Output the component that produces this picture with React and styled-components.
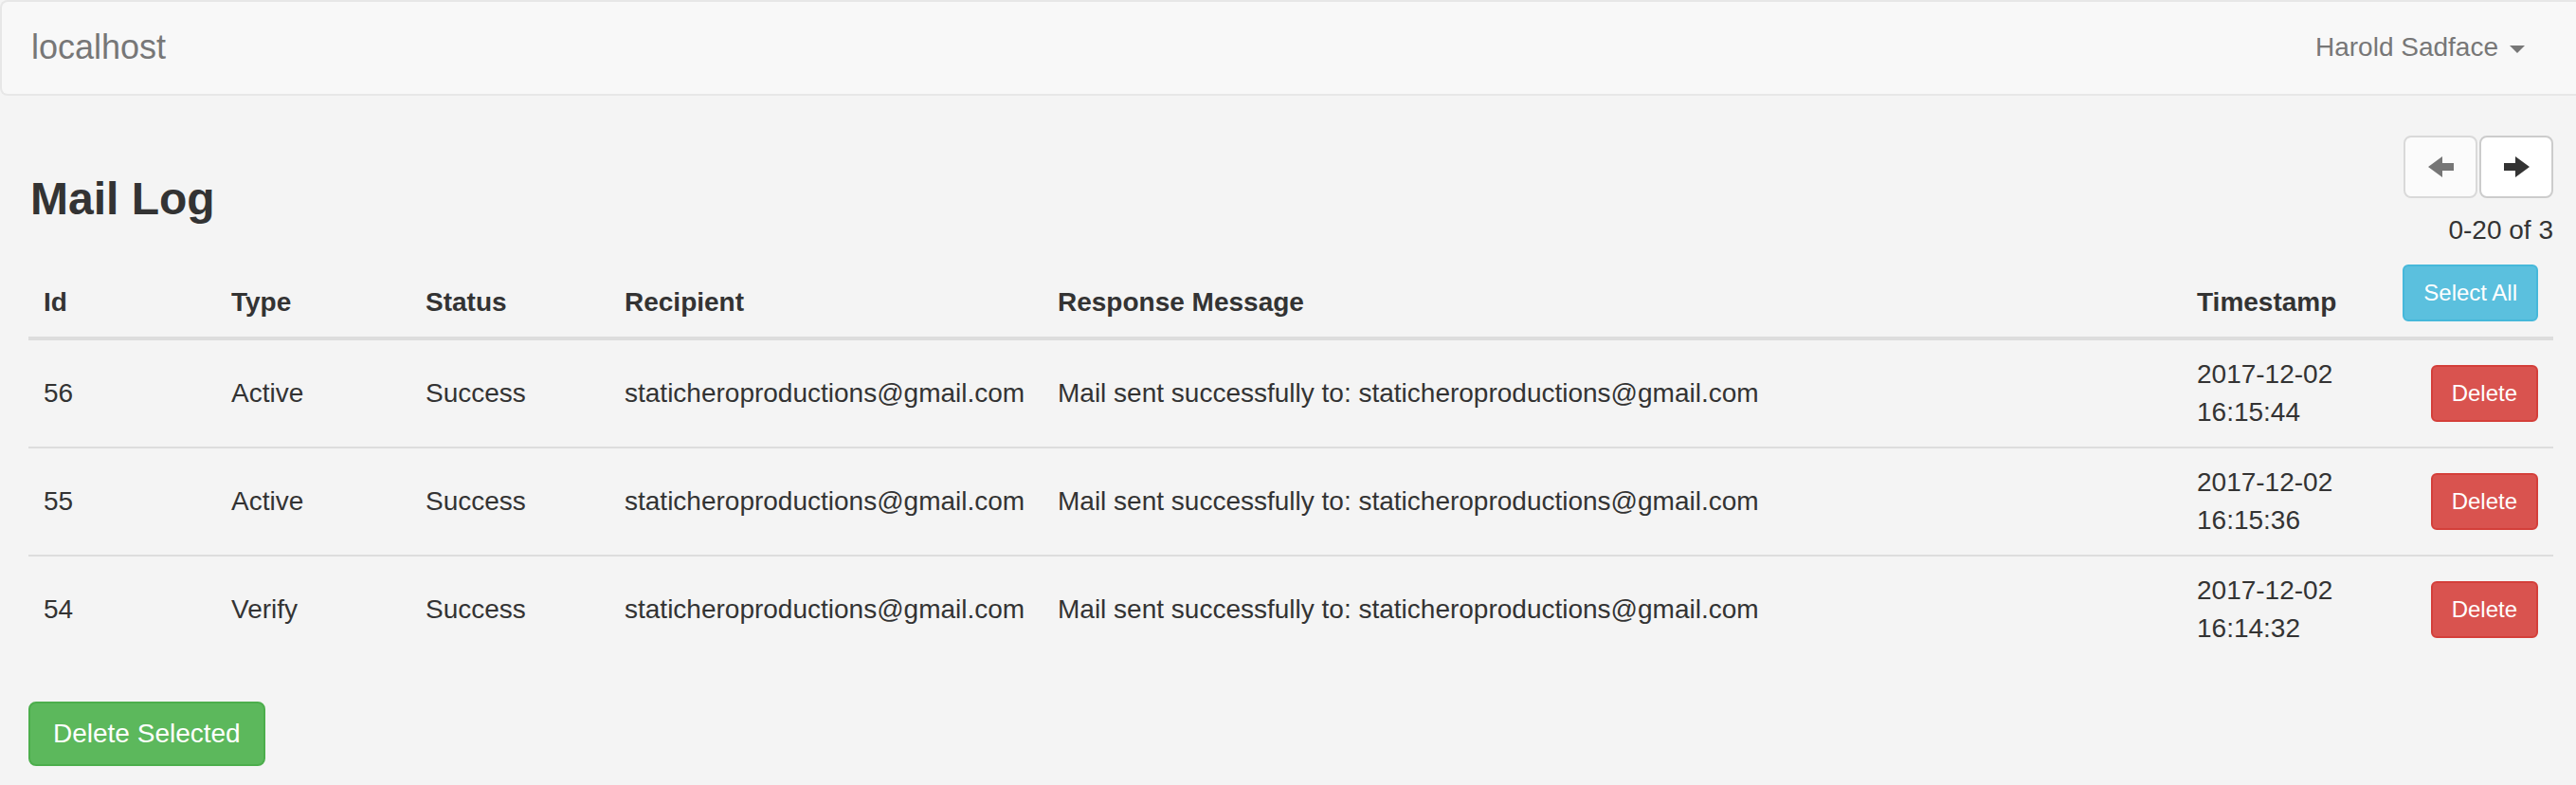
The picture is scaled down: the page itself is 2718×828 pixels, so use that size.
import React from "react";
import styled, { createGlobalStyle } from "styled-components";

const ROWS = [
  { id: 56, type: "Active", status: "Success", date: "2017-12-02", time: "16:15:44" },
  { id: 55, type: "Active", status: "Success", date: "2017-12-02", time: "16:15:36" },
  { id: 54, type: "Verify", status: "Success", date: "2017-12-02", time: "16:14:32" },
];

const EMAIL = "staticheroproductions@gmail.com";

// fixed column widths so the table lines up with the reference
const COLS = [198, 205, 210, 457, null, 216, 176];

const Global = createGlobalStyle`
  html, body {
    margin: 0;
    padding: 0;
    background: #f4f4f4;
  }
  body {
    font-family: "Liberation Sans", Helvetica, Arial, sans-serif;
    font-size: 28px;
    line-height: 40px;
    color: #333;
  }
  * { box-sizing: border-box; }
`;

const Navbar = styled.nav`
  height: 101px;
  background: #f8f8f8;
  border: 2px solid #e7e7e7;
  border-right: none;
  border-radius: 8px 0 0 8px;
  display: flex;
  align-items: flex-start;
  justify-content: space-between;
  margin-bottom: 40px;
`;

const Brand = styled.a`
  display: block;
  padding: 28px 30px 0 31px;
  font-size: 36px;
  line-height: 40px;
  color: #777;
  text-decoration: none;
`;

const UserMenu = styled.a`
  display: flex;
  align-items: center;
  padding: 28px 54px 0 0;
  font-size: 28px;
  line-height: 40px;
  color: #777;
  text-decoration: none;
`;

const Caret = styled.span`
  display: inline-block;
  width: 0;
  height: 0;
  margin-left: 12px;
  margin-top: 4px;
  border-top: 8px solid #777;
  border-left: 8px solid transparent;
  border-right: 8px solid transparent;
`;

const Page = styled.main`
  padding: 0 24px 0 30px;
`;

const Header = styled.div`
  display: flex;
  justify-content: space-between;
  align-items: flex-end;
`;

const Title = styled.h3`
  margin: 0 0 26px 2px;
  font-size: 48px;
  line-height: 1.1;
  font-weight: 700;
  color: #333;
`;

const Pager = styled.div`
  display: flex;
  flex-direction: column;
  align-items: flex-end;
  padding-top: 2px;
`;

const PagerButtons = styled.div`
  display: flex;
  gap: 2px;
  margin-bottom: 14px;
`;

const ArrowButton = styled.button`
  width: 78px;
  height: 66px;
  display: flex;
  align-items: center;
  justify-content: center;
  padding: 0;
  background: #fff;
  border: 2px solid #ccc;
  border-radius: 8px;
  color: #333;
  opacity: ${(p) => (p.disabled ? 0.65 : 1)};
  cursor: ${(p) => (p.disabled ? "not-allowed" : "pointer")};
`;

const Count = styled.div`
  font-size: 28px;
  line-height: 40px;
`;

const Table = styled.table`
  width: 100%;
  table-layout: fixed;
  border-collapse: collapse;
  border-spacing: 0;
  margin-bottom: 40px;

  th, td {
    padding: 16px;
    text-align: left;
    font-size: 28px;
    line-height: 40px;
  }
  th {
    font-weight: 700;
    vertical-align: bottom;
    border-bottom: 4px solid #ddd;
  }
  td {
    vertical-align: middle;
    border-top: 2px solid #ddd;
  }
  tbody tr:first-child td {
    border-top: none;
  }
`;

const ActionCell = styled.td`
  && {
    text-align: right;
  }
`;

const ActionHead = styled.th`
  && {
    text-align: right;
  }
`;

const SmallButton = styled.button`
  display: inline-block;
  font-family: inherit;
  font-size: 24px;
  line-height: 36px;
  padding: 10px 20px;
  border-radius: 6px;
  color: #fff;
  border: 2px solid ${(p) => p.$border};
  background: ${(p) => p.$bg};
  cursor: pointer;
`;

const BigButton = styled.button`
  display: inline-block;
  font-family: inherit;
  font-size: 28px;
  line-height: 40px;
  padding: 12px 24px;
  border-radius: 8px;
  color: #fff;
  border: 2px solid #4cae4c;
  background: #5cb85c;
  cursor: pointer;
  margin-top: 1px;
`;

function Arrow({ dir }) {
  return (
    <svg width="27" height="22" viewBox="0 0 27 22" style={{ transform: dir === "left" ? "scaleX(-1)" : "none" }}>
      <path d="M0 7 H12 V0 L27 11 L12 22 V15 H0 Z" fill="currentColor" />
    </svg>
  );
}

export default function App() {
  return (
    <>
      <Global />
      <Navbar>
        <Brand href="#">localhost</Brand>
        <UserMenu href="#">
          Harold Sadface
          <Caret />
        </UserMenu>
      </Navbar>
      <Page>
        <Header>
          <Title>Mail Log</Title>
          <Pager>
            <PagerButtons>
              <ArrowButton disabled>
                <Arrow dir="left" />
              </ArrowButton>
              <ArrowButton>
                <Arrow dir="right" />
              </ArrowButton>
            </PagerButtons>
            <Count>0-20 of 3</Count>
          </Pager>
        </Header>
        <Table>
          <colgroup>
            {COLS.map((w, i) => (
              <col key={i} style={w ? { width: w } : undefined} />
            ))}
          </colgroup>
          <thead>
            <tr>
              <th>Id</th>
              <th>Type</th>
              <th>Status</th>
              <th>Recipient</th>
              <th>Response Message</th>
              <th>Timestamp</th>
              <ActionHead>
                <SmallButton $bg="#5bc0de" $border="#46b8da">Select All</SmallButton>
              </ActionHead>
            </tr>
          </thead>
          <tbody>
            {ROWS.map((r) => (
              <tr key={r.id}>
                <td>{r.id}</td>
                <td>{r.type}</td>
                <td>{r.status}</td>
                <td>{EMAIL}</td>
                <td>Mail sent successfully to: {EMAIL}</td>
                <td>
                  {r.date} {r.time}
                </td>
                <ActionCell>
                  <SmallButton $bg="#d9534f" $border="#d43f3a">Delete</SmallButton>
                </ActionCell>
              </tr>
            ))}
          </tbody>
        </Table>
        <BigButton>Delete Selected</BigButton>
      </Page>
    </>
  );
}
